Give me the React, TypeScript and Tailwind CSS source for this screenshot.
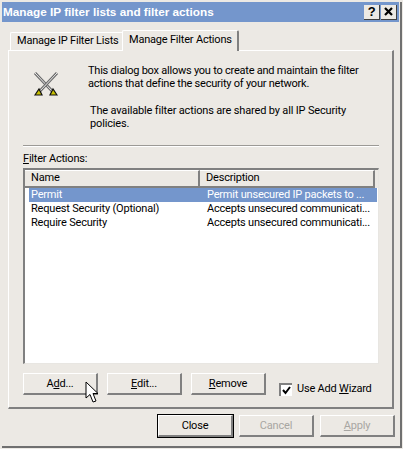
const font = "[font-family:Roboto,'Liberation_Sans',Arial,sans-serif]";

function DialogButton({ children, disabled = false, className = '' }: { children: React.ReactNode; disabled?: boolean; className?: string }) {
  return (
    <button className={`w-[75px] h-[22px] shrink-0 bg-[#ece9e4] border-t border-l border-r-2 border-b-2 border-t-white border-l-white border-r-[#808080] border-b-[#808080] text-[11px] leading-none flex items-center justify-center ${disabled ? 'text-[#a8a6a2]' : 'text-black'} ${className}`}>
      {children}
    </button>
  );
}

function Swords() {
  return (
    <svg width="26" height="26" viewBox="0 0 26 26" className="shrink-0">
      <path d="M2 2 L20 21" stroke="#6a6a6a" strokeWidth="3" />
      <path d="M2 2 L20 21" stroke="#ececec" strokeWidth="1" />
      <path d="M24 2 L6 21" stroke="#6a6a6a" strokeWidth="3" />
      <path d="M24 2 L6 21" stroke="#ececec" strokeWidth="1" />
      <path d="M2 24 L6 18 L9 24 Z" fill="#c8c000" stroke="#111" strokeWidth="1.2" />
      <path d="M24 24 L20 18 L17 24 Z" fill="#c8c000" stroke="#111" strokeWidth="1.2" />
    </svg>
  );
}

function Cursor() {
  return (
    <svg width="14" height="23" viewBox="0 0 14 23" className="absolute left-[85px] top-[381px]">
      <path d="M1 1 L1 17 L5 13.5 L8 21 L11 20 L8 12.5 L13 12.5 Z" fill="#fff" stroke="#000" strokeWidth="1" />
    </svg>
  );
}

export default function App() {
  return (
    <div className={`relative w-[403px] h-[449px] bg-[#ece9e4] flex flex-col pt-[2px] pl-[2px] pr-[1px] pb-[1px] overflow-hidden tracking-[-0.2px] ${font}`}>
      <div className="flex-1 flex flex-col border-r-2 border-b-2 border-[#707070] pr-[1px]">
        {/* Title bar */}
        <div className="h-[20px] bg-[#7496cc] flex items-center justify-between pl-[1px] pr-[2px] shrink-0">
          <span className="text-white font-bold text-[11.75px] tracking-[0px] whitespace-nowrap font-['Liberation_Sans']">Manage IP filter lists and filter actions</span>
          <div className="flex gap-[1px]">
            <div className="w-[16px] h-[15px] bg-[#ece9e4] border-r border-b border-[#404040] flex items-center justify-center font-bold text-[13px] text-black font-['Liberation_Sans']">?</div>
            <div className="w-[16px] h-[15px] bg-[#ece9e4] border-r border-b border-[#404040] flex items-center justify-center">
              <svg width="9" height="9" viewBox="0 0 9 9"><path d="M1 1 L8 8 M8 1 L1 8" stroke="#000" strokeWidth="2.2" /></svg>
            </div>
          </div>
        </div>

        {/* Tabs */}
        <div className="flex items-end pl-[8px] h-[28px] shrink-0 relative">
          <div className="w-[112px] h-[18px] bg-[#ece9e4] border-t border-l border-white rounded-tl-[2px] flex items-center pl-[6px] text-[11px] text-black whitespace-nowrap shrink-0">Manage IP Filter Lists</div>
          <div className="w-[117px] h-[21px] bg-[#ece9e4] border-t border-l border-white border-r-2 border-r-[#808080] rounded-t-[2px] flex items-center pl-[6px] pb-[2px] text-[11px] text-black whitespace-nowrap relative top-[1px] z-10 shrink-0">Manage Filter Actions</div>
        </div>

        {/* Panel */}
        <div className="ml-[6px] w-[386px] h-[359px] border-t border-l border-white border-r-2 border-b-2 border-r-[#808080] border-b-[#808080] flex flex-col pl-[14px] pr-[13px] shrink-0">
          <div className="flex pt-[13px] shrink-0">
            <div className="w-[65px] pl-[10px] pt-[7px] shrink-0"><Swords /></div>
            <div className="text-[11px] leading-[13px] text-black w-[285px] shrink-0 whitespace-nowrap">
              <p className="tracking-[-0.23px]">This dialog box allows you to create and maintain the filter<br />actions that define the security of your network.</p>
              <p className="mt-[14px] pl-[2px] tracking-[-0.16px]">The available filter actions are shared by all IP Security<br />policies.</p>
            </div>
          </div>
          <div className="mt-[15px] h-[2px] border-t border-[#9c9a96] border-b border-b-white shrink-0" />
          <div className="mt-[5px] text-[11px] leading-[14px] text-black"><span className="underline">F</span>ilter Actions:</div>

          {/* List */}
          <div className="mt-[2px] h-[196px] bg-white border-t-2 border-l-2 border-t-[#808080] border-l-[#808080] border-r border-b border-r-[#e8e6e2] border-b-[#e8e6e2] flex flex-col text-[11px] text-black shrink-0">
            <div className="flex h-[18px] shrink-0 pr-[3px] bg-[#ece9e4]">
              <div className="w-[175px] shrink-0 border-r-2 border-b-2 border-[#808080] border-t border-t-white pl-[6px] flex items-center">Name</div>
              <div className="flex-1 border-r-2 border-b-2 border-[#808080] border-t border-t-white pl-[6px] flex items-center">Description</div>
            </div>
            <div className="flex flex-col">
              <div className="flex h-[14px] items-center bg-[#7496cc] text-white ml-[4px] mr-[1px]">
                <div className="w-[178px] shrink-0 pl-[2px]">Permit</div>
                <div className="whitespace-nowrap">Permit unsecured IP packets to ...</div>
              </div>
              <div className="flex h-[14px] items-center pl-[6px]">
                <div className="w-[176px] shrink-0">Request Security (Optional)</div>
                <div className="whitespace-nowrap">Accepts unsecured communicati...</div>
              </div>
              <div className="flex h-[14px] items-center pl-[6px]">
                <div className="w-[176px] shrink-0">Require Security</div>
                <div className="whitespace-nowrap">Accepts unsecured communicati...</div>
              </div>
            </div>
          </div>

          {/* List actions */}
          <div className="mt-[9px] flex items-start gap-[9px]">
            <DialogButton>A<span className="underline">d</span>d...</DialogButton>
            <DialogButton><span className="underline">E</span>dit...</DialogButton>
            <DialogButton><span className="underline">R</span>emove</DialogButton>
            <div className="flex items-center ml-[4px] mt-[8px] gap-[5px] text-[11px] text-black whitespace-nowrap">
              <div className="w-[13px] h-[13px] bg-white border-t-2 border-l-2 border-[#808080] flex items-center justify-center">
                <svg width="9" height="9" viewBox="0 0 9 9"><path d="M1 4 L3.5 7 L8 1" fill="none" stroke="#000" strokeWidth="2" /></svg>
              </div>
              <span>Use Add <span className="underline">W</span>izard</span>
            </div>
          </div>
        </div>

        {/* Footer */}
        <div className="mt-[6px] flex justify-end gap-[6px] pr-[4px]">
          <DialogButton className="outline outline-1 outline-black">Close</DialogButton>
          <DialogButton disabled>Cancel</DialogButton>
          <DialogButton disabled><span className="underline">A</span>pply</DialogButton>
        </div>
      </div>
      <Cursor />
    </div>
  );
}
